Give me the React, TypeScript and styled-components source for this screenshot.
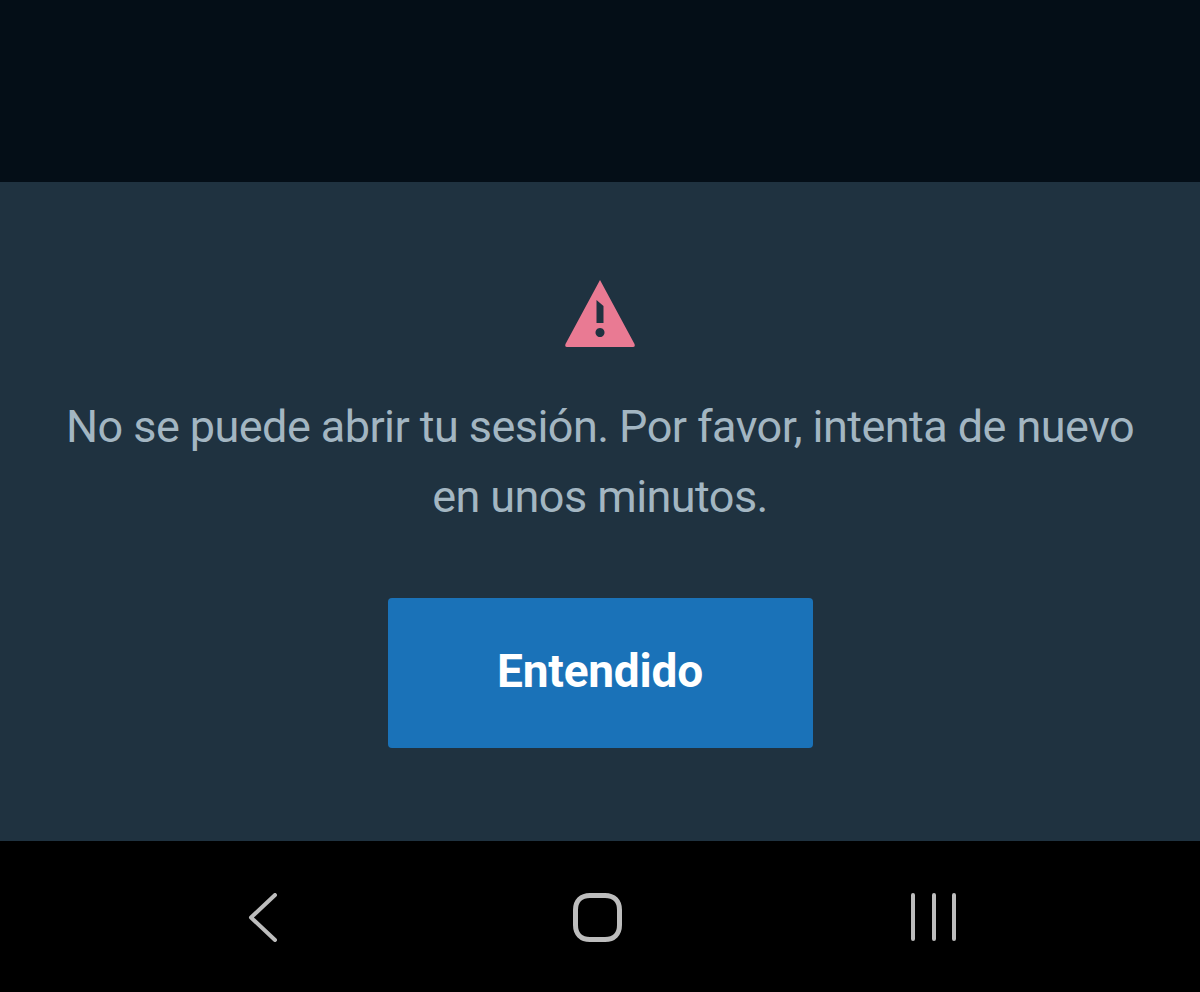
import styled, { createGlobalStyle } from "styled-components";

const GlobalStyle = createGlobalStyle`
  html, body {
    margin: 0;
    padding: 0;
    background: #000;
  }
`;

const Screen = styled.div`
  width: 1200px;
  height: 992px;
  display: flex;
  flex-direction: column;
  font-family: Roboto, "Liberation Sans", sans-serif;
  overflow: hidden;
`;

const Backdrop = styled.div`
  height: 182px;
  background: #040e17;
`;

const Sheet = styled.div`
  height: 659px;
  background: #1f3240;
  display: flex;
  flex-direction: column;
  align-items: center;
  padding-top: 97px;
  box-sizing: border-box;
`;

const Message = styled.p`
  margin: 43px 0 0;
  width: 1160px;
  text-align: center;
  font-size: 45px;
  font-weight: 400;
  letter-spacing: -0.56px;
  line-height: 70px;
  color: #a3b6c2;
`;

const Button = styled.button`
  margin-top: 66px;
  width: 425px;
  height: 150px;
  padding: 0 0 4px;
  border: 0;
  border-radius: 4px;
  background: #1a72b8;
  color: #fff;
  font-family: inherit;
  font-size: 46px;
  font-weight: 700;
  letter-spacing: -0.2px;
`;

const NavBar = styled.div`
  height: 151px;
  background: #000;
  display: flex;
  align-items: flex-start;
  justify-content: center;
  padding: 52px 5px 0 0;
  box-sizing: border-box;
`;

const NavSlot = styled.div`
  width: 335px;
  height: 49px;
  display: flex;
  justify-content: center;
`;

const WarningIcon = () => (
  <svg width="72" height="70" viewBox="0 0 72 70">
    <path
      fill="#e97a93"
      fillRule="evenodd"
      d="M36 1 L70.5 65 Q71.5 68 69 68 L3 68 Q0.5 68 1.5 65 Z M32.5 21 L32.5 44 L39.5 44 L39.5 27 Z M36 49 a4.5 4.5 0 1 0 0.01 0 Z"
    />
  </svg>
);

const BackIcon = () => (
  <svg width="32" height="49" viewBox="0 0 32 49">
    <path d="M28 2 L4 24.5 L28 47" fill="none" stroke="#bdbdbd" strokeWidth="4" strokeLinecap="round" strokeLinejoin="round" />
  </svg>
);

const HomeIcon = () => (
  <svg width="49" height="49" viewBox="0 0 49 49">
    <path
      d="M17 2.5 H32 C41 2.5 46.5 8 46.5 17 V32 C46.5 41 41 46.5 32 46.5 H17 C8 46.5 2.5 41 2.5 32 V17 C2.5 8 8 2.5 17 2.5 Z"
      fill="none"
      stroke="#bdbdbd"
      strokeWidth="5"
    />
  </svg>
);

const RecentsIcon = () => (
  <svg width="48" height="49" viewBox="0 0 48 49">
    <path d="M4 2 V46 M25 2 V46 M45 2 V46" fill="none" stroke="#bdbdbd" strokeWidth="4" strokeLinecap="round" />
  </svg>
);

export default function App() {
  return (
    <>
      <GlobalStyle />
      <Screen>
        <Backdrop />
        <Sheet>
          <WarningIcon />
          <Message>
            No se puede abrir tu sesión. Por favor, intenta de nuevo
            <br />
            en unos minutos.
          </Message>
          <Button>Entendido</Button>
        </Sheet>
        <NavBar>
          <NavSlot>
            <BackIcon />
          </NavSlot>
          <NavSlot>
            <HomeIcon />
          </NavSlot>
          <NavSlot>
            <RecentsIcon />
          </NavSlot>
        </NavBar>
      </Screen>
    </>
  );
}
